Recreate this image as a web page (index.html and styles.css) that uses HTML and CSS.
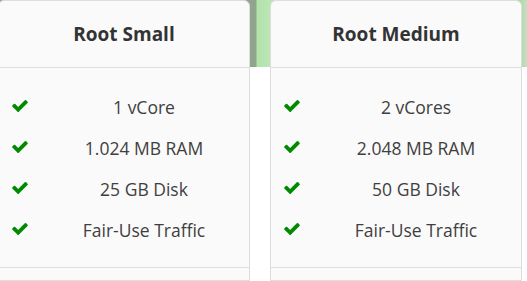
FILE: index.html
```html
<!DOCTYPE html>
<html lang="de">
<head>
<meta charset="utf-8">
<title>Root Server</title>
<link rel="stylesheet" href="styles.css">
</head>
<body>
<div class="plans">
  <div class="plan">
    <div class="plan-head"><h3 class="plan-title">Root Small</h3></div>
    <ul class="features">
      <li class="feature"><svg class="check" viewBox="121 334 1550 1188"><path d="M1671 566q0 40-28 68l-724 724-136 136q-28 28-68 28t-68-28l-136-136-362-362q-28-28-28-68t28-68l136-136q28-28 68-28t68 28l294 295 656-657q28-28 68-28t68 28l136 136q28 28 28 68z"/></svg><span class="feature-text">1 vCore</span></li>
      <li class="feature"><svg class="check" viewBox="121 334 1550 1188"><path d="M1671 566q0 40-28 68l-724 724-136 136q-28 28-68 28t-68-28l-136-136-362-362q-28-28-28-68t28-68l136-136q28-28 68-28t68 28l294 295 656-657q28-28 68-28t68 28l136 136q28 28 28 68z"/></svg><span class="feature-text">1.024 MB RAM</span></li>
      <li class="feature"><svg class="check" viewBox="121 334 1550 1188"><path d="M1671 566q0 40-28 68l-724 724-136 136q-28 28-68 28t-68-28l-136-136-362-362q-28-28-28-68t28-68l136-136q28-28 68-28t68 28l294 295 656-657q28-28 68-28t68 28l136 136q28 28 28 68z"/></svg><span class="feature-text">25 GB Disk</span></li>
      <li class="feature"><svg class="check" viewBox="121 334 1550 1188"><path d="M1671 566q0 40-28 68l-724 724-136 136q-28 28-68 28t-68-28l-136-136-362-362q-28-28-28-68t28-68l136-136q28-28 68-28t68 28l294 295 656-657q28-28 68-28t68 28l136 136q28 28 28 68z"/></svg><span class="feature-text">Fair-Use Traffic</span></li>
    </ul>
    <div class="plan-foot"></div>
  </div>
  <div class="plan">
    <div class="plan-head"><h3 class="plan-title">Root Medium</h3></div>
    <ul class="features">
      <li class="feature"><svg class="check" viewBox="121 334 1550 1188"><path d="M1671 566q0 40-28 68l-724 724-136 136q-28 28-68 28t-68-28l-136-136-362-362q-28-28-28-68t28-68l136-136q28-28 68-28t68 28l294 295 656-657q28-28 68-28t68 28l136 136q28 28 28 68z"/></svg><span class="feature-text">2 vCores</span></li>
      <li class="feature"><svg class="check" viewBox="121 334 1550 1188"><path d="M1671 566q0 40-28 68l-724 724-136 136q-28 28-68 28t-68-28l-136-136-362-362q-28-28-28-68t28-68l136-136q28-28 68-28t68 28l294 295 656-657q28-28 68-28t68 28l136 136q28 28 28 68z"/></svg><span class="feature-text">2.048 MB RAM</span></li>
      <li class="feature"><svg class="check" viewBox="121 334 1550 1188"><path d="M1671 566q0 40-28 68l-724 724-136 136q-28 28-68 28t-68-28l-136-136-362-362q-28-28-28-68t28-68l136-136q28-28 68-28t68 28l294 295 656-657q28-28 68-28t68 28l136 136q28 28 28 68z"/></svg><span class="feature-text">50 GB Disk</span></li>
      <li class="feature"><svg class="check" viewBox="121 334 1550 1188"><path d="M1671 566q0 40-28 68l-724 724-136 136q-28 28-68 28t-68-28l-136-136-362-362q-28-28-28-68t28-68l136-136q28-28 68-28t68 28l294 295 656-657q28-28 68-28t68 28l136 136q28 28 28 68z"/></svg><span class="feature-text">Fair-Use Traffic</span></li>
    </ul>
    <div class="plan-foot"></div>
  </div>
</div>
</body>
</html>
```
FILE: styles.css
```css
html, body {
  margin: 0;
  padding: 0;
  height: 100%;
  overflow: hidden;
}
body {
  font-family: "Open Sans", "Noto Sans", sans-serif;
  color: #333;
  background:
    linear-gradient(90deg, #8fa58c 0, #8fa58c 256px, #b3e2ac 257px, #b9e6b3 268px, #a9dca4 520px, #c9dcc4 527px) top left / 100% 67px no-repeat,
    #fff;
}
.plans {
  display: flex;
  gap: 20px;
  margin-left: -2px;
}
.plan {
  width: 252px;
  flex: none;
  box-sizing: border-box;
  background: #fafafa;
  border: 1px solid #ddd;
  border-radius: 6px 6px 0 0;
  height: 281px;
  overflow: hidden;
}
.plan-head {
  height: 66px;
  border-bottom: 1px solid #ddd;
  display: flex;
  align-items: center;
  justify-content: center;
}
.plan-title {
  margin: 0;
  font-size: 19px;
  font-weight: 700;
  color: #333;
  padding-bottom: 1px;
}
.features {
  list-style: none;
  margin: 0;
  padding: 18px 0 17px;
}
.feature {
  display: flex;
  align-items: center;
  height: 41px;
  padding-left: 13px;
}
.check {
  width: 16px;
  height: 12px;
  fill: #008a00;
  flex: none;
  margin-top: -2px;
}
.feature-text {
  flex: 1;
  margin-left: 11px;
  text-align: center;
  font-size: 17.5px;
  color: #3f3f3f;
}
.plan-foot {
  border-top: 1px solid #ddd;
  height: 40px;
}
```
